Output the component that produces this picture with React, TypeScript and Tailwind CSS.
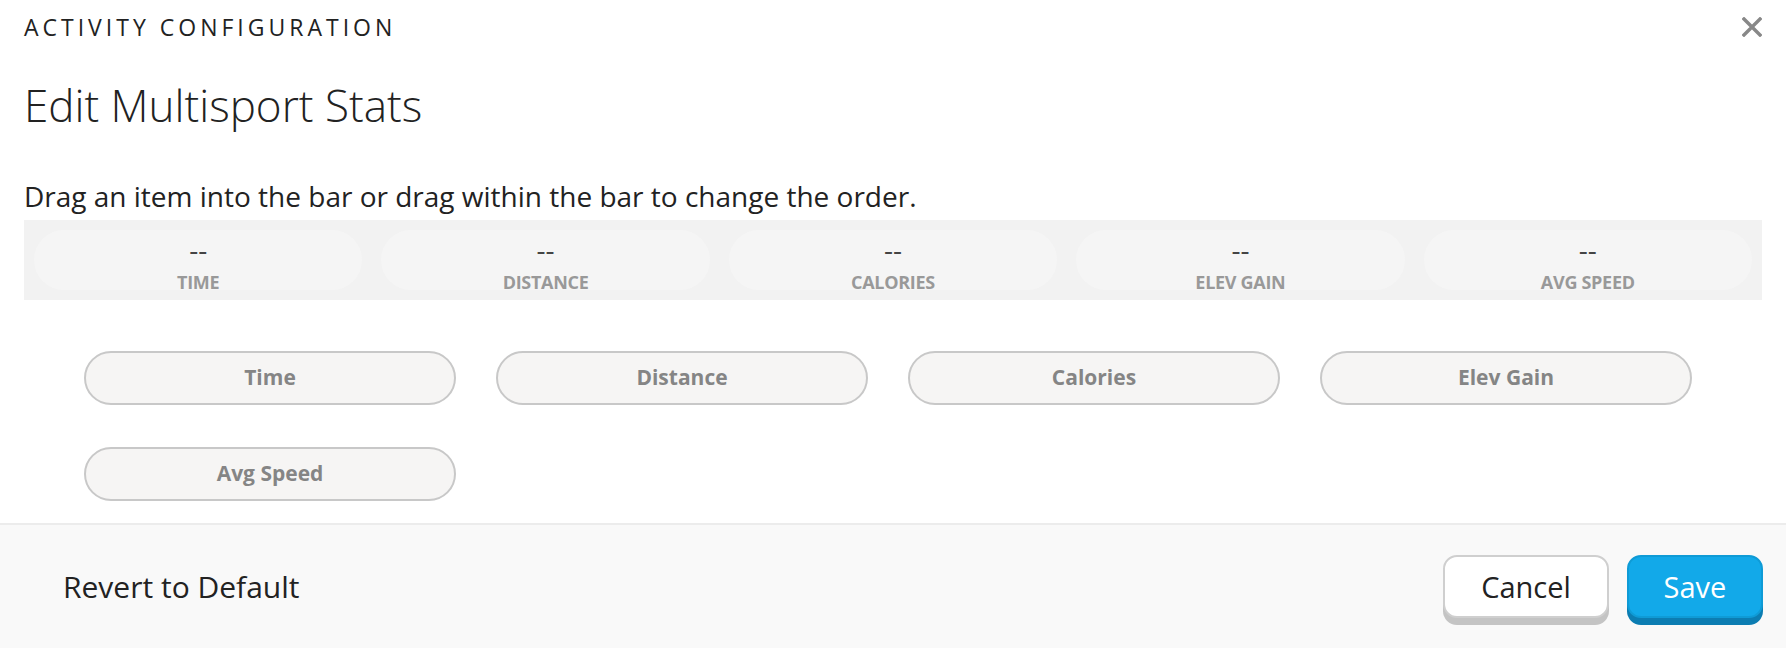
import React from 'react';

const stats = ['Time', 'Distance', 'Calories', 'Elev Gain', 'Avg Speed'];

const App: React.FC = () => {
  return (
    <div className="w-[1786px] h-[648px] bg-white flex flex-col font-['Open_Sans',sans-serif] text-[#222]">
      <div className="flex-1 px-[24px]">
        {/* Header */}
        <div className="flex items-start justify-between pt-[11px]">
          <div className="text-[23px] leading-[32px] tracking-[4px] uppercase">Activity Configuration</div>
          <button className="mt-[6px] w-[20px] h-[20px] text-[#888]" aria-label="Close">
            <svg viewBox="0 0 20 20" className="w-[20px] h-[20px]" stroke="currentColor" strokeWidth="3.4" strokeLinecap="square">
              <path d="M2 2 L18 18 M18 2 L2 18" />
            </svg>
          </button>
        </div>
        <h1 className="mt-[33px] text-[44px] leading-[58px] font-light">Edit Multisport Stats</h1>
        <p className="mt-[43px] text-[28px] leading-[38px]">Drag an item into the bar or drag within the bar to change the order.</p>

        {/* Stats bar */}
        <div className="mt-[5px] h-[80px] bg-[#f2f2f2] grid grid-cols-5 gap-[19px] px-[10px] py-[10px]">
          {stats.map((s) => (
            <div key={s} className="rounded-full bg-[#f5f5f5] flex flex-col items-center justify-end">
              <div className="text-[28px] leading-[28px] text-[#444]">--</div>
              <div className="mt-[11px] text-[18px] leading-[16px] font-bold tracking-[-0.3px] text-[#999] uppercase">{s}</div>
            </div>
          ))}
        </div>

        {/* Available items */}
        <div className="mt-[51px] pl-[60px] grid grid-cols-[repeat(4,372px)] gap-x-[40px] gap-y-[42px]">
          {stats.map((s) => (
            <div key={s} className="h-[54px] rounded-full border-2 border-[#c8c8c8] bg-[#f6f5f4] flex items-center justify-center text-[21px] font-bold text-[#858585]">
              {s}
            </div>
          ))}
        </div>
      </div>

      {/* Footer */}
      <div className="h-[125px] border-t-2 border-[#ececec] bg-[#f9f9f9] flex items-center justify-between pl-[63px] pr-[23px]">
        <button className="text-[30px] text-[#222]">Revert to Default</button>
        <div className="flex items-center gap-[18px]">
          <button className="w-[166px] h-[63px] rounded-[14px] border-2 border-[#cfcfcf] bg-white text-[29px] text-[#222] shadow-[0_7px_0_#c4c4c4]">Cancel</button>
          <button className="w-[136px] h-[63px] rounded-[14px] border-2 border-[#0f9bd6] bg-[#12a9e9] text-[29px] text-white shadow-[0_7px_0_#0c7db2]">Save</button>
        </div>
      </div>
    </div>
  );
};

export default App;
